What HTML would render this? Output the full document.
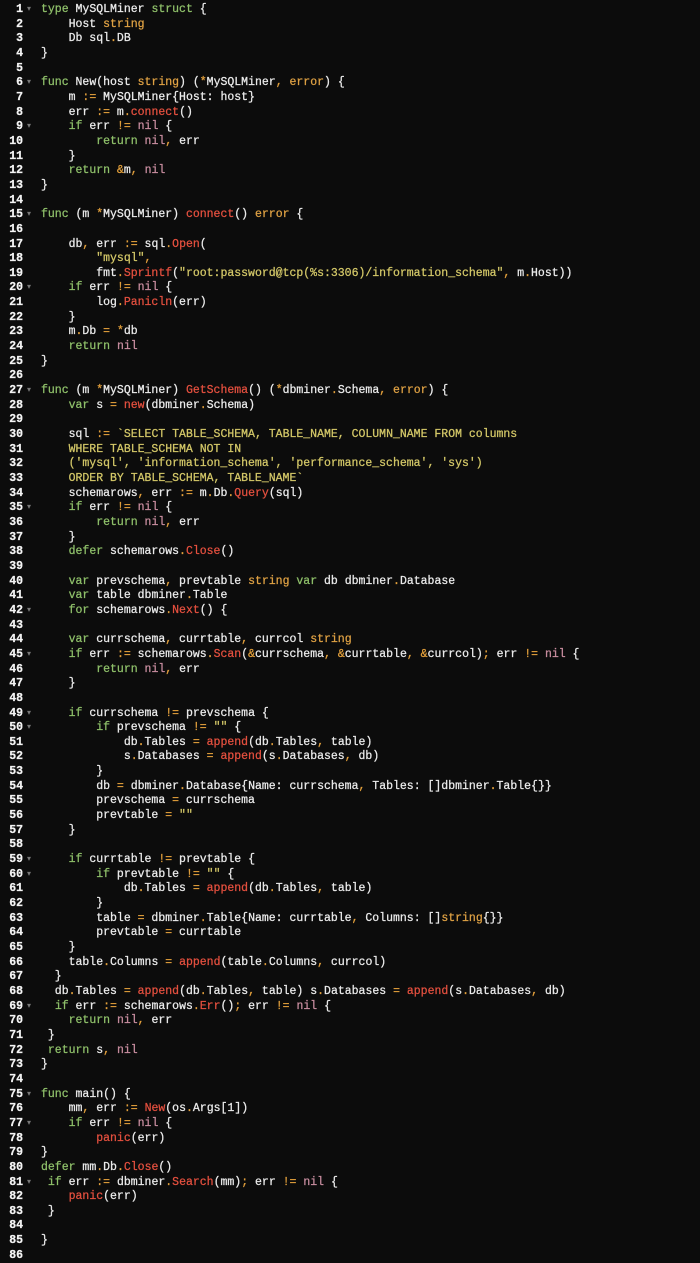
<!DOCTYPE html>
<html><head><meta charset="utf-8"><style>
html,body{margin:0;padding:0;background:#0c0c0c;width:700px;height:1262px;overflow:hidden}
.w{position:absolute;left:0;top:3px;font-family:"Liberation Mono",monospace;font-size:11.5px;line-height:14.66px;color:#ececec;-webkit-text-stroke:0.25px currentColor}
.l{position:relative;height:14.66px;white-space:pre}
.g{position:absolute;left:0;top:0;width:23px;text-align:right;font-weight:bold;color:#f4f4f4}
.a{position:absolute;left:27px;color:#777;font-size:8px;-webkit-text-stroke:0}
.c{position:absolute;left:41px}
.k{color:#8fc06a}.t{color:#e0a244}.o{color:#e3a03c}.f{color:#e5503f}.n{color:#c98ea0}.s{color:#d4c868}
</style></head><body><div class="w">
<div class="l"><span class="g">1</span><span class="a">▾</span><span class="c"><span class="k">type</span> MySQLMiner <span class="k">struct</span> {</span></div>
<div class="l"><span class="g">2</span><span class="c">    Host <span class="t">string</span></span></div>
<div class="l"><span class="g">3</span><span class="c">    Db sql<span class="o">.</span>DB</span></div>
<div class="l"><span class="g">4</span><span class="c">}</span></div>
<div class="l"><span class="g">5</span><span class="c"></span></div>
<div class="l"><span class="g">6</span><span class="a">▾</span><span class="c"><span class="k">func</span> New(host <span class="t">string</span>) (<span class="o">*</span>MySQLMiner<span class="o">,</span> <span class="t">error</span>) {</span></div>
<div class="l"><span class="g">7</span><span class="c">    m <span class="o">:=</span> MySQLMiner{Host: host}</span></div>
<div class="l"><span class="g">8</span><span class="c">    err <span class="o">:=</span> m<span class="o">.</span><span class="f">connect</span>()</span></div>
<div class="l"><span class="g">9</span><span class="a">▾</span><span class="c">    <span class="k">if</span> err <span class="o">!=</span> <span class="n">nil</span> {</span></div>
<div class="l"><span class="g">10</span><span class="c">        <span class="k">return</span> <span class="n">nil</span><span class="o">,</span> err</span></div>
<div class="l"><span class="g">11</span><span class="c">    }</span></div>
<div class="l"><span class="g">12</span><span class="c">    <span class="k">return</span> <span class="o">&amp;</span>m<span class="o">,</span> <span class="n">nil</span></span></div>
<div class="l"><span class="g">13</span><span class="c">}</span></div>
<div class="l"><span class="g">14</span><span class="c"></span></div>
<div class="l"><span class="g">15</span><span class="a">▾</span><span class="c"><span class="k">func</span> (m <span class="o">*</span>MySQLMiner) <span class="f">connect</span>() <span class="t">error</span> {</span></div>
<div class="l"><span class="g">16</span><span class="c"></span></div>
<div class="l"><span class="g">17</span><span class="c">    db<span class="o">,</span> err <span class="o">:=</span> sql<span class="o">.</span><span class="f">Open</span>(</span></div>
<div class="l"><span class="g">18</span><span class="c">        <span class="s">"mysql"</span><span class="o">,</span></span></div>
<div class="l"><span class="g">19</span><span class="c">        fmt<span class="o">.</span><span class="f">Sprintf</span>(<span class="s">"root:password@tcp(%s:3306)/information_schema"</span><span class="o">,</span> m<span class="o">.</span>Host))</span></div>
<div class="l"><span class="g">20</span><span class="a">▾</span><span class="c">    <span class="k">if</span> err <span class="o">!=</span> <span class="n">nil</span> {</span></div>
<div class="l"><span class="g">21</span><span class="c">        log<span class="o">.</span><span class="f">Panicln</span>(err)</span></div>
<div class="l"><span class="g">22</span><span class="c">    }</span></div>
<div class="l"><span class="g">23</span><span class="c">    m<span class="o">.</span>Db <span class="o">=</span> <span class="o">*</span>db</span></div>
<div class="l"><span class="g">24</span><span class="c">    <span class="k">return</span> <span class="n">nil</span></span></div>
<div class="l"><span class="g">25</span><span class="c">}</span></div>
<div class="l"><span class="g">26</span><span class="c"></span></div>
<div class="l"><span class="g">27</span><span class="a">▾</span><span class="c"><span class="k">func</span> (m <span class="o">*</span>MySQLMiner) <span class="f">GetSchema</span>() (<span class="o">*</span>dbminer<span class="o">.</span>Schema<span class="o">,</span> <span class="t">error</span>) {</span></div>
<div class="l"><span class="g">28</span><span class="c">    <span class="k">var</span> s <span class="o">=</span> <span class="f">new</span>(dbminer<span class="o">.</span>Schema)</span></div>
<div class="l"><span class="g">29</span><span class="c"></span></div>
<div class="l"><span class="g">30</span><span class="c">    sql <span class="o">:=</span> <span class="s">`SELECT TABLE_SCHEMA, TABLE_NAME, COLUMN_NAME FROM columns</span></span></div>
<div class="l"><span class="g">31</span><span class="c"><span class="s">    WHERE TABLE_SCHEMA NOT IN</span></span></div>
<div class="l"><span class="g">32</span><span class="c"><span class="s">    ('mysql', 'information_schema', 'performance_schema', 'sys')</span></span></div>
<div class="l"><span class="g">33</span><span class="c"><span class="s">    ORDER BY TABLE_SCHEMA, TABLE_NAME`</span></span></div>
<div class="l"><span class="g">34</span><span class="c">    schemarows<span class="o">,</span> err <span class="o">:=</span> m<span class="o">.</span>Db<span class="o">.</span><span class="f">Query</span>(sql)</span></div>
<div class="l"><span class="g">35</span><span class="a">▾</span><span class="c">    <span class="k">if</span> err <span class="o">!=</span> <span class="n">nil</span> {</span></div>
<div class="l"><span class="g">36</span><span class="c">        <span class="k">return</span> <span class="n">nil</span><span class="o">,</span> err</span></div>
<div class="l"><span class="g">37</span><span class="c">    }</span></div>
<div class="l"><span class="g">38</span><span class="c">    <span class="k">defer</span> schemarows<span class="o">.</span><span class="f">Close</span>()</span></div>
<div class="l"><span class="g">39</span><span class="c"></span></div>
<div class="l"><span class="g">40</span><span class="c">    <span class="k">var</span> prevschema<span class="o">,</span> prevtable <span class="t">string</span> <span class="k">var</span> db dbminer<span class="o">.</span>Database</span></div>
<div class="l"><span class="g">41</span><span class="c">    <span class="k">var</span> table dbminer<span class="o">.</span>Table</span></div>
<div class="l"><span class="g">42</span><span class="a">▾</span><span class="c">    <span class="k">for</span> schemarows<span class="o">.</span><span class="f">Next</span>() {</span></div>
<div class="l"><span class="g">43</span><span class="c"></span></div>
<div class="l"><span class="g">44</span><span class="c">    <span class="k">var</span> currschema<span class="o">,</span> currtable<span class="o">,</span> currcol <span class="t">string</span></span></div>
<div class="l"><span class="g">45</span><span class="a">▾</span><span class="c">    <span class="k">if</span> err <span class="o">:=</span> schemarows<span class="o">.</span><span class="f">Scan</span>(<span class="o">&amp;</span>currschema<span class="o">,</span> <span class="o">&amp;</span>currtable<span class="o">,</span> <span class="o">&amp;</span>currcol)<span class="o">;</span> err <span class="o">!=</span> <span class="n">nil</span> {</span></div>
<div class="l"><span class="g">46</span><span class="c">        <span class="k">return</span> <span class="n">nil</span><span class="o">,</span> err</span></div>
<div class="l"><span class="g">47</span><span class="c">    }</span></div>
<div class="l"><span class="g">48</span><span class="c"></span></div>
<div class="l"><span class="g">49</span><span class="a">▾</span><span class="c">    <span class="k">if</span> currschema <span class="o">!=</span> prevschema {</span></div>
<div class="l"><span class="g">50</span><span class="a">▾</span><span class="c">        <span class="k">if</span> prevschema <span class="o">!=</span> <span class="s">""</span> {</span></div>
<div class="l"><span class="g">51</span><span class="c">            db<span class="o">.</span>Tables <span class="o">=</span> <span class="f">append</span>(db<span class="o">.</span>Tables<span class="o">,</span> table)</span></div>
<div class="l"><span class="g">52</span><span class="c">            s<span class="o">.</span>Databases <span class="o">=</span> <span class="f">append</span>(s<span class="o">.</span>Databases<span class="o">,</span> db)</span></div>
<div class="l"><span class="g">53</span><span class="c">        }</span></div>
<div class="l"><span class="g">54</span><span class="c">        db <span class="o">=</span> dbminer<span class="o">.</span>Database{Name: currschema<span class="o">,</span> Tables: []dbminer<span class="o">.</span>Table{}}</span></div>
<div class="l"><span class="g">55</span><span class="c">        prevschema <span class="o">=</span> currschema</span></div>
<div class="l"><span class="g">56</span><span class="c">        prevtable <span class="o">=</span> <span class="s">""</span></span></div>
<div class="l"><span class="g">57</span><span class="c">    }</span></div>
<div class="l"><span class="g">58</span><span class="c"></span></div>
<div class="l"><span class="g">59</span><span class="a">▾</span><span class="c">    <span class="k">if</span> currtable <span class="o">!=</span> prevtable {</span></div>
<div class="l"><span class="g">60</span><span class="a">▾</span><span class="c">        <span class="k">if</span> prevtable <span class="o">!=</span> <span class="s">""</span> {</span></div>
<div class="l"><span class="g">61</span><span class="c">            db<span class="o">.</span>Tables <span class="o">=</span> <span class="f">append</span>(db<span class="o">.</span>Tables<span class="o">,</span> table)</span></div>
<div class="l"><span class="g">62</span><span class="c">        }</span></div>
<div class="l"><span class="g">63</span><span class="c">        table <span class="o">=</span> dbminer<span class="o">.</span>Table{Name: currtable<span class="o">,</span> Columns: []<span class="t">string</span>{}}</span></div>
<div class="l"><span class="g">64</span><span class="c">        prevtable <span class="o">=</span> currtable</span></div>
<div class="l"><span class="g">65</span><span class="c">    }</span></div>
<div class="l"><span class="g">66</span><span class="c">    table<span class="o">.</span>Columns <span class="o">=</span> <span class="f">append</span>(table<span class="o">.</span>Columns<span class="o">,</span> currcol)</span></div>
<div class="l"><span class="g">67</span><span class="c">  }</span></div>
<div class="l"><span class="g">68</span><span class="c">  db<span class="o">.</span>Tables <span class="o">=</span> <span class="f">append</span>(db<span class="o">.</span>Tables<span class="o">,</span> table) s<span class="o">.</span>Databases <span class="o">=</span> <span class="f">append</span>(s<span class="o">.</span>Databases<span class="o">,</span> db)</span></div>
<div class="l"><span class="g">69</span><span class="a">▾</span><span class="c">  <span class="k">if</span> err <span class="o">:=</span> schemarows<span class="o">.</span><span class="f">Err</span>()<span class="o">;</span> err <span class="o">!=</span> <span class="n">nil</span> {</span></div>
<div class="l"><span class="g">70</span><span class="c">    <span class="k">return</span> <span class="n">nil</span><span class="o">,</span> err</span></div>
<div class="l"><span class="g">71</span><span class="c"> }</span></div>
<div class="l"><span class="g">72</span><span class="c"> <span class="k">return</span> s<span class="o">,</span> <span class="n">nil</span></span></div>
<div class="l"><span class="g">73</span><span class="c">}</span></div>
<div class="l"><span class="g">74</span><span class="c"></span></div>
<div class="l"><span class="g">75</span><span class="a">▾</span><span class="c"><span class="k">func</span> main() {</span></div>
<div class="l"><span class="g">76</span><span class="c">    mm<span class="o">,</span> err <span class="o">:=</span> <span class="f">New</span>(os<span class="o">.</span>Args[1])</span></div>
<div class="l"><span class="g">77</span><span class="a">▾</span><span class="c">    <span class="k">if</span> err <span class="o">!=</span> <span class="n">nil</span> {</span></div>
<div class="l"><span class="g">78</span><span class="c">        <span class="f">panic</span>(err)</span></div>
<div class="l"><span class="g">79</span><span class="c">}</span></div>
<div class="l"><span class="g">80</span><span class="c"><span class="k">defer</span> mm<span class="o">.</span>Db<span class="o">.</span><span class="f">Close</span>()</span></div>
<div class="l"><span class="g">81</span><span class="a">▾</span><span class="c"> <span class="k">if</span> err <span class="o">:=</span> dbminer<span class="o">.</span><span class="f">Search</span>(mm)<span class="o">;</span> err <span class="o">!=</span> <span class="n">nil</span> {</span></div>
<div class="l"><span class="g">82</span><span class="c">    <span class="f">panic</span>(err)</span></div>
<div class="l"><span class="g">83</span><span class="c"> }</span></div>
<div class="l"><span class="g">84</span><span class="c"></span></div>
<div class="l"><span class="g">85</span><span class="c">}</span></div>
<div class="l"><span class="g">86</span><span class="c"></span></div>
</div></body></html>
